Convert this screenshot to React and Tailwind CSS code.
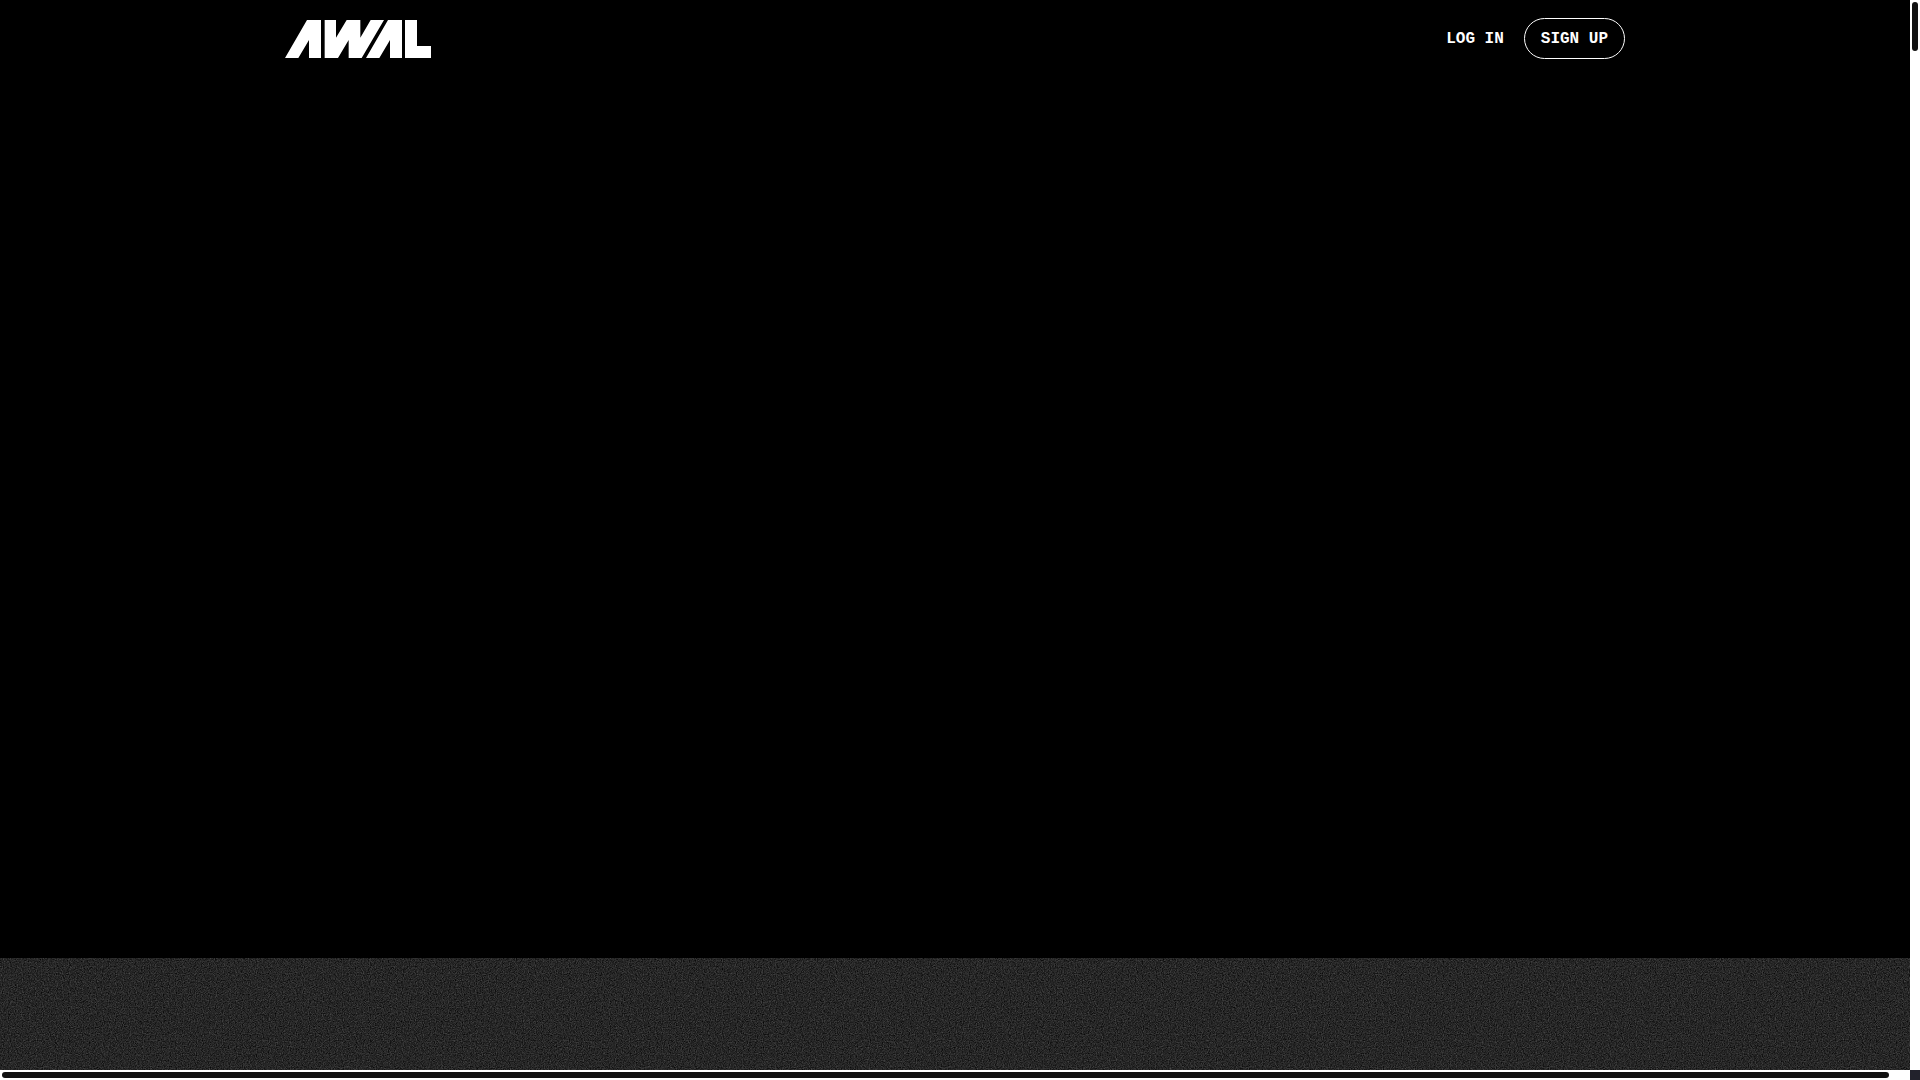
function Logo() {
  return (
    <svg viewBox="0 0 438 114" className="h-[38px] w-[146px]" fill="white" role="img" aria-label="AWAL">
      <path d="M0 114 66 0h42v114H72V60l-32 54Z" />
      <path d="M119 0h34v53L185 0h41v53L257 0h40l-67 114h-39V60l-32 54h-40Z" />
      <path d="M243 114 309 0h42v114h-36V60l-32 54Z" />
      <path d="M360 0h36v78h42v36h-78Z" />
    </svg>
  );
}

function Grain() {
  return (
    <svg className="block size-full" aria-hidden="true">
      <filter id="grain" x="0" y="0" width="100%" height="100%" colorInterpolationFilters="sRGB">
        <feTurbulence type="fractalNoise" baseFrequency="0.85" numOctaves="3" seed="4" />
        <feColorMatrix values="0.34 0 0 0 -0.02  0.34 0 0 0 -0.02  0.34 0 0 0 -0.02  0 0 0 0 1" />
      </filter>
      <rect width="100%" height="100%" filter="url(#grain)" />
    </svg>
  );
}

export default function App() {
  return (
    <div className="grid h-screen grid-cols-[1fr_10px] grid-rows-[1fr_10px] overflow-hidden bg-white">
      <div className="flex min-h-0 flex-col bg-black text-white">
        <header className="px-6 pt-[18px]">
          <div className="mx-auto flex max-w-[1340px] items-center justify-between">
            <a href="#home">
              <Logo />
            </a>
            <nav className="flex items-center gap-5 font-['Liberation_Mono',monospace] text-base leading-6 font-bold">
              <a href="#login">LOG IN</a>
              <a href="#signup" className="rounded-full border border-white px-4 pt-2 pb-[7px]">
                SIGN UP
              </a>
            </nav>
          </div>
        </header>
        <main className="flex min-h-0 flex-1 flex-col">
          <div className="flex-1" />
          <section className="h-28 bg-[#262626]">
            <Grain />
          </section>
        </main>
      </div>
      <div className="bg-white p-0.5">
        <div className="h-[49px] w-1.5 rounded-full bg-[#111111]" />
      </div>
      <div className="bg-white p-0.5">
        <div className="h-1.5 w-[99%] rounded-full bg-[#111111]" />
      </div>
      <div className="bg-[#22222c]" />
    </div>
  );
}
